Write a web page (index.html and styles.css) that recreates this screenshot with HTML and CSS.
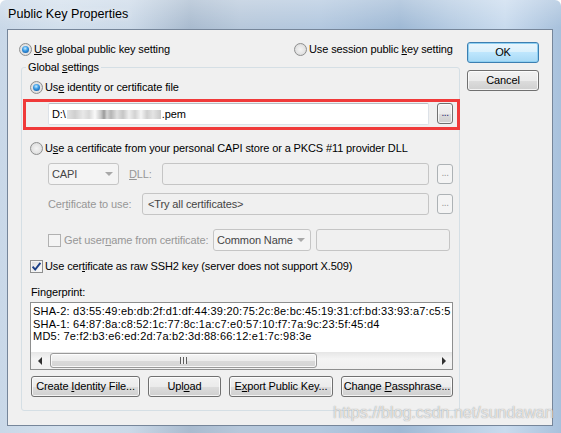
FILE: index.html
```html
<!DOCTYPE html>
<html>
<head>
<meta charset="utf-8">
<link rel="stylesheet" href="styles.css">
</head>
<body>
<div class="window">
  <div class="titlebar"><span class="title">Public Key Properties</span></div>
  <div class="client">
    <div class="left">
      <div class="toprow">
        <div class="opt first"><span class="radio on"></span><span><u>U</u>se global public key setting</span></div>
        <div class="opt"><span class="radio"></span><span>Use session public <u>k</u>ey setting</span></div>
      </div>
      <div class="group">
        <div class="legend">Global <u>s</u>ettings</div>
        <div class="opt ind r1"><span class="radio on"></span><span>Us<u>e</u> identity or certificate file</span></div>
        <div class="highlight">
          <div class="field path"><span>D:\</span><span class="blurred"></span><span>.pem</span></div>
          <div class="dots">...</div>
        </div>
        <div class="opt ind r2"><span class="radio"></span><span>U<u>s</u>e a certificate from your personal CAPI store or a PKCS #11 provider DLL</span></div>
        <div class="row capi">
          <div class="combo w71"><span>CAPI</span><span class="arrow"></span></div>
          <span class="dis lbl-dll"><u>D</u>LL:</span>
          <div class="field dfield w267"></div>
          <div class="dots off">...</div>
        </div>
        <div class="row cert">
          <span class="dis lbl-cert">Cer<u>t</u>ificate to use:</span>
          <div class="field dfield w287"><span class="ftext">&lt;Try all certificates&gt;</span></div>
          <div class="dots off">...</div>
        </div>
        <div class="row user">
          <span class="check off"></span>
          <span class="dis lbl-user">Get user<u>n</u>ame from certificate:</span>
          <div class="combo w98"><span>Common Name</span><span class="arrow"></span></div>
          <div class="field dfield w134"></div>
        </div>
        <div class="opt ind r3"><span class="check on"><svg width="11" height="11" viewBox="0 0 11 11"><path d="M1.6 5.6 L4.2 8.6 L9.4 1.8" fill="none" stroke="#1c3f86" stroke-width="1.9"/></svg></span><span>Use cer<u>t</u>ificate as raw SSH2 key (server does not support X.509)</span></div>
        <div class="fp-label">Fingerprint:</div>
        <div class="fp-box">
          <div class="fp-text">
            <div>SHA-2: d3:55:49:eb:db:2f:d1:df:44:39:20:75:2c:8e:bc:45:19:31:cf:bd:33:93:a7:c5:5</div>
            <div>SHA-1: 64:87:8a:c8:52:1c:77:8c:1a:c7:e0:57:10:f7:7a:9c:23:5f:45:d4</div>
            <div>MD5: 7e:f2:b3:e6:ed:2d:7a:b2:3d:88:66:12:e1:7c:98:3e</div>
          </div>
          <div class="hscroll">
            <div class="sarrow"><span class="tri-l"></span></div>
            <div class="track">
              <div class="thumb"><span class="grip"></span></div>
            </div>
            <div class="sarrow"><span class="tri-r"></span></div>
          </div>
        </div>
        <div class="btnrow">
          <div class="btn w109"><span>Create <u>I</u>dentity File...</span></div>
          <div class="btn w73"><span>Upl<u>o</u>ad</span></div>
          <div class="btn w104"><span>E<u>x</u>port Public Key...</span></div>
          <div class="btn w112"><span>Change <u>P</u>assphrase...</span></div>
        </div>
      </div>
    </div>
    <div class="right">
      <div class="btn default"><span>OK</span></div>
      <div class="btn cancel"><span>Cancel</span></div>
    </div>
  </div>
  <div class="watermark">https://blog.csdn.net/sundawan</div>
</div>
</body>
</html>
```

FILE: styles.css
```css
html, body {
  margin: 0;
  padding: 0;
  background: #ffffff;
}
body {
  font-family: "Liberation Sans", Arial, sans-serif;
  font-size: 11px;
  letter-spacing: -0.12px;
  color: #000;
}
u { text-decoration-thickness: 1px; text-underline-offset: 1px; }

.window {
  position: relative;
  width: 561px;
  height: 433px;
  box-sizing: border-box;
  display: flex;
  flex-direction: column;
  padding: 0 8px 7px 7px;
  overflow: hidden;
  border-radius: 6px 6px 0 0;
  background:
    linear-gradient(180deg, rgba(255,255,255,0.28) 0, rgba(255,255,255,0) 28px),
    linear-gradient(90deg, #c9d8e8 0px, #d2dfec 60px, #cbd9e8 130px, #a9bbcf 190px, #b7c8db 240px, #b3c8df 320px, #9fb9d5 400px, #b5cbe2 450px, #c9dbee 505px, #a8c1dc 561px);
}
.titlebar {
  height: 29px;
  display: flex;
  align-items: center;
  padding-left: 1px;
  box-sizing: border-box;
  padding-bottom: 1px;
}
.title {
  font-size: 12.6px;
  letter-spacing: 0;
  color: #000;
  text-shadow: 0 0 6px rgba(255,255,255,0.8);
}
.client {
  flex: 1;
  display: flex;
  align-items: flex-start;
  gap: 7px;
  padding: 12px 13px 0 12px;
  border: 1px solid #76869a;
  background: #f0f0f0;
}
.left { width: 440px; }
.right { width: 72px; display: flex; flex-direction: column; gap: 7px; }

.toprow {
  display: flex;
  margin: 1px 0 0 -1px;
}
.toprow .first { width: 275px; }

.opt {
  display: flex;
  align-items: center;
  gap: 2px;
  height: 13px;
  line-height: 13px;
  white-space: nowrap;
}
.radio {
  width: 13px;
  height: 13px;
  box-sizing: border-box;
  border-radius: 50%;
  border: 1px solid #8e8f8f;
  background: radial-gradient(circle at 50% 50%, #f4f4f4 0, #e4e4e4 55%, #cfcfcf 100%);
  display: inline-grid;
  place-items: center;
  flex: none;
}
.radio.on::after {
  content: "";
  width: 7px;
  height: 7px;
  border-radius: 50%;
  background: radial-gradient(circle at 45% 35%, #c9ecff 0, #3e9ee6 40%, #0f5aa8 85%, #0b3f7a 100%);
}

.group {
  margin: 11px 0 0 1px;
  border: 1px solid #d5dfe5;
  border-radius: 3px;
  padding-bottom: 13px;
}
.legend {
  width: max-content;
  margin: -7px 0 0 4px;
  padding: 0 2px;
  background: #f0f0f0;
  line-height: 13px;
  height: 13px;
}
.ind { margin-left: 8px; }
.r1 { margin-top: 7px; }
.r2 { margin-top: 12px; }
.r3 { margin-top: 9px; }

.highlight {
  display: flex;
  gap: 8px;
  margin: 5px -1px 0 1px;
  border: 3px solid #f03a3a;
  padding: 1px 4px 2px 22px;
  align-items: flex-start;
}
.field {
  box-sizing: border-box;
  height: 22px;
  border: 1px solid #dde2e8;
  border-top-color: #b8bdc4;
  border-radius: 2px;
  background: #fff;
  display: flex;
  align-items: center;
  padding-left: 3px;
  white-space: nowrap;
}
.path { width: 381px; }
.blurred {
  display: inline-block;
  width: 94px;
  height: 9px;
  margin: 0 1px 0 1px;
  background: linear-gradient(90deg, #e2e2e2 0, #cfcfcf 8px, #e8e8e8 16px, #d8d8d8 22px, #fafafa 28px, #c8c8c8 34px, #9a9a9a 37px, #d4d4d4 40px, #b5b5b5 44px, #e0e0e0 50px, #c6c6c6 56px, #eeeeee 62px, #d2d2d2 68px, #f5f5f5 74px, #cfcfcf 80px, #e4e4e4 86px, #c9c9c9 94px);
  filter: blur(0.6px);
}
.dots {
  box-sizing: border-box;
  width: 16px;
  height: 21px;
  border: 1px solid #707070;
  border-radius: 3px;
  background: linear-gradient(#f2f2f2 0%, #ebebeb 50%, #dddddd 50%, #cfcfcf 100%);
  box-shadow: inset 0 0 0 1px rgba(255,255,255,0.7);
  color: #1f1f6b;
  font-size: 10px;
  line-height: 17px;
  text-align: center;
  letter-spacing: -0.5px;
}
.dots.off {
  border-color: #adb2b5;
  background: #f4f4f4;
  color: #9a9a9a;
  box-shadow: none;
}

.row {
  display: flex;
  align-items: center;
  height: 22px;
  padding-left: 26px;
  white-space: nowrap;
}
.capi { margin-top: 8px; }
.cert { margin-top: 8px; }
.user { margin-top: 14px; }
.capi .dots, .cert .dots { margin-left: 8px; height: 20px; line-height: 16px; }

.combo {
  box-sizing: border-box;
  height: 22px;
  border: 1px solid #c5c5c5;
  border-radius: 3px;
  background: #f4f4f4;
  display: flex;
  align-items: center;
  justify-content: space-between;
  padding: 0 5px 0 3px;
  color: #444;
}
.arrow {
  width: 0;
  height: 0;
  border-left: 4px solid transparent;
  border-right: 4px solid transparent;
  border-top: 4px solid #a8a8a8;
}
.w71 { width: 71px; }
.w98 { width: 98px; padding-left: 3px; }
.w267 { width: 267px; }
.w287 { width: 287px; }
.w134 { width: 134px; margin-left: 5px; }
.dfield {
  background: #f0f0f0;
  border: 1px solid #c5c5c5;
  border-radius: 3px;
}
.ftext { color: #444; padding-left: 2px; }
.dis { color: #979797; }
.lbl-dll { margin-left: 10px; width: 33px; }
.lbl-cert { width: 94px; }
.lbl-user { width: 149px; margin-left: 3px; }

.check {
  width: 13px;
  height: 13px;
  box-sizing: border-box;
  border: 1px solid #8e8f8f;
  background: linear-gradient(135deg, #dcdcdc 0%, #f0f0f0 60%, #ffffff 100%);
  box-shadow: inset 0 0 0 1px #f4f4f4;
  display: inline-grid;
  place-items: center;
  flex: none;
}
.check.off {
  border-color: #b1b1b1;
  background: #f4f4f4;
  box-shadow: none;
}
.check svg { display: block; }

.fp-label {
  margin: 13px 0 0 9px;
  height: 13px;
  line-height: 13px;
}
.fp-box {
  margin: 3px 0 0 8px;
  width: 423px;
  height: 68px;
  box-sizing: border-box;
  border: 1px solid #8e8f8f;
  background: #fff;
  display: flex;
  flex-direction: column;
  overflow: hidden;
}
.fp-text {
  flex: 1;
  padding: 2px 0 0 2px;
  line-height: 12.5px;
  letter-spacing: 0.22px;
  white-space: nowrap;
  overflow: hidden;
}
.hscroll {
  height: 17px;
  display: flex;
  background: linear-gradient(#e6e6e6, #f4f4f4 40%, #f0f0f0);
}
.sarrow {
  width: 17px;
  display: grid;
  place-items: center;
  flex: none;
}
.tri-l {
  width: 0; height: 0;
  border-top: 4px solid transparent;
  border-bottom: 4px solid transparent;
  border-right: 4px solid #303030;
}
.tri-r {
  width: 0; height: 0;
  border-top: 4px solid transparent;
  border-bottom: 4px solid transparent;
  border-left: 4px solid #303030;
}
.track {
  flex: 1;
  display: flex;
  align-items: center;
}
.thumb {
  margin-left: 2px;
  width: 267px;
  height: 15px;
  box-sizing: border-box;
  border: 1px solid #9a9a9a;
  border-radius: 3px;
  background: linear-gradient(#f5f5f5 0%, #ececec 50%, #dadada 51%, #d4d4d4 100%);
  box-shadow: inset 0 0 0 1px rgba(255,255,255,0.8);
  display: grid;
  place-items: center;
}
.grip {
  width: 7px;
  height: 7px;
  background: repeating-linear-gradient(90deg, #5e5e5e 0 1px, #f0f0f0 1px 3px);
}

.btnrow {
  display: flex;
  gap: 8px;
  margin: 6px 0 0 9px;
}
.btn {
  box-sizing: border-box;
  height: 21px;
  border: 1px solid #707070;
  border-radius: 3px;
  background: linear-gradient(#f2f2f2 0%, #ebebeb 50%, #dddddd 50%, #cfcfcf 100%);
  box-shadow: inset 0 0 0 1px rgba(255,255,255,0.75);
  display: flex;
  align-items: center;
  justify-content: center;
  white-space: nowrap;
  line-height: 13px;
}
.btn.default {
  border-color: #3c7fb1;
  background: linear-gradient(#eaf6fd 0%, #d9f0fc 50%, #bee6fd 50%, #a7d9f5 100%);
  box-shadow: inset 0 0 0 1px #8fd0f2;
}
.w109 { width: 109px; }
.w73 { width: 73px; }
.w104 { width: 104px; }
.w112 { width: 112px; }

.watermark {
  position: absolute;
  left: 333px;
  top: 404px;
  font-size: 16px;
  line-height: 18px;
  letter-spacing: 0;
  color: rgba(255,255,255,0.72);
  text-shadow: 0 0 1px rgba(90,90,90,0.7);
  white-space: nowrap;
}
```
